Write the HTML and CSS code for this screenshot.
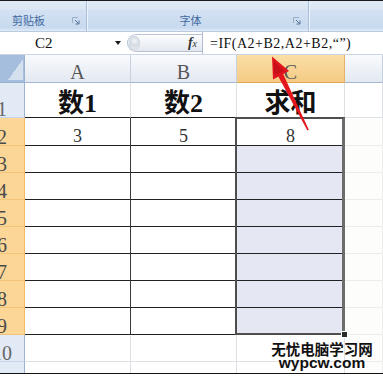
FILE: index.html
```html
<!DOCTYPE html>
<html>
<head>
<meta charset="utf-8">
<link rel="stylesheet" href="styles.css">
</head>
<body>
<div class="page">
  <div class="ribbon">
    <div class="grp g1">
      <div class="grp-top"></div>
      <div class="grp-band"><span class="glabel">剪贴板</span><svg class="launch" width="8" height="8" viewBox="0 0 8 8"><path d="M0.5 6V0.5H6" fill="none" stroke="#9aaec8"/><path d="M3 3L6.5 6.5M7 3.5V7H3.5" fill="none" stroke="#56709a"/></svg></div>
    </div>
    <div class="grp g2">
      <div class="grp-top"></div>
      <div class="grp-band"><span class="glabel mid">字体</span><svg class="launch" width="8" height="8" viewBox="0 0 8 8"><path d="M0.5 6V0.5H6" fill="none" stroke="#9aaec8"/><path d="M3 3L6.5 6.5M7 3.5V7H3.5" fill="none" stroke="#56709a"/></svg></div>
    </div>
    <div class="grp g3">
      <div class="grp-top"></div>
      <div class="grp-band"></div>
    </div>
  </div>

  <div class="fbar">
    <div class="namebox"><span class="nb-text">C2</span><span class="nb-drop"></span></div>
    <div class="fx-pill"><span class="grip"></span><span class="fx"><span class="fx-f">f</span><span class="fx-x">x</span></span></div>
    <div class="formula">=IF(A2+B2,A2+B2,“”)</div>
  </div>

  <div class="sheet">
    <div class="corner"></div>
    <div class="hd">A</div>
    <div class="hd">B</div>
    <div class="hd sel">C</div>
    <div class="hd"></div>

    <div class="rh"><span>1</span></div>
    <div class="c t">数1</div>
    <div class="c t">数2</div>
    <div class="c t">求和</div>
    <div class="c"></div>

    <div class="rh sel"><span>2</span></div>
    <div class="c b">3</div>
    <div class="c b">5</div>
    <div class="c b">8</div>
    <div class="c d"></div>

    <div class="rh sel"><span>3</span></div>
    <div class="c b"></div><div class="c b"></div><div class="c b s"></div><div class="c d"></div>
    <div class="rh sel"><span>4</span></div>
    <div class="c b"></div><div class="c b"></div><div class="c b s"></div><div class="c d"></div>
    <div class="rh sel"><span>5</span></div>
    <div class="c b"></div><div class="c b"></div><div class="c b s"></div><div class="c d"></div>
    <div class="rh sel"><span>6</span></div>
    <div class="c b"></div><div class="c b"></div><div class="c b s"></div><div class="c d"></div>
    <div class="rh sel"><span>7</span></div>
    <div class="c b"></div><div class="c b"></div><div class="c b s"></div><div class="c d"></div>
    <div class="rh sel"><span>8</span></div>
    <div class="c b"></div><div class="c b"></div><div class="c b s"></div><div class="c d"></div>
    <div class="rh sel"><span>9</span></div>
    <div class="c b"></div><div class="c b"></div><div class="c b s"></div><div class="c d"></div>

    <div class="rh"><span>10</span></div>
    <div class="c"></div><div class="c"></div><div class="c"></div><div class="c d"></div>
    <div class="rh"><span>11</span></div>
    <div class="c"></div><div class="c"></div><div class="c"></div><div class="c d"></div>
  </div>
  <div class="bottom-line"></div>

  <div class="selection"></div>
  <div class="fill-handle"></div>

  <svg class="arrow" width="383" height="376" viewBox="0 0 383 376">
    <polygon points="282.8,73.2 278.2,76.2 307.4,130.4 308.8,129.8" fill="#e3161e"/>
    <polygon points="272,56.5 289,71 273,79.5" fill="#e0141c"/>
    <polygon points="273.5,61 284,71 274.5,75" fill="#c80f17"/>
  </svg>

  <div class="watermark">
    <div class="wm-cn">无忧电脑学习网</div>
    <div class="wm-en">wypcw.com</div>
  </div>
</div>
</body>
</html>
```

FILE: styles.css
```css
html, body {
  margin: 0;
  padding: 0;
  background: #fff;
}
body {
  width: 383px;
  height: 376px;
  overflow: hidden;
  font-family: "Liberation Serif", "Noto Sans CJK SC", serif;
}
.page {
  position: relative;
  width: 383px;
  height: 376px;
  overflow: hidden;
}

/* ribbon */
.ribbon {
  display: flex;
  height: 30px;
  border-top: 1px solid #1b1b1b;
  background: #d6e3f3;
}
.grp {
  display: flex;
  flex-direction: column;
  box-sizing: border-box;
  border-right: 1px solid #a9bfdb;
  box-shadow: 1px 0 0 #eef4fb;
}
.g1 { width: 87px; }
.g2 { width: 221px; margin-left: 1px; }
.g3 { flex: 1; border-right: none; box-shadow: none; margin-left: 1px; }
.grp-top {
  height: 9px;
  background: linear-gradient(#e0eaf6, #dae6f4);
}
.grp-band {
  flex: 1;
  display: flex;
  align-items: center;
  background: linear-gradient(#d3e1f2, #c8daef 85%, #e4ecf7);
}
.glabel {
  font-family: "Noto Sans CJK SC", sans-serif;
  font-size: 11px;
  line-height: 12px;
  color: #4068a0;
  padding-left: 12px;
  padding-bottom: 1px;
}
.glabel.mid {
  flex: 1;
  padding-left: 0;
  text-align: center;
}
.g1 .glabel { flex: 1; }
.launch {
  display: block;
  margin-right: 6px;
  flex-shrink: 0;
}
.g2 .launch { margin-right: 7px; }

/* formula bar */
.fbar {
  display: flex;
  height: 24px;
  box-sizing: border-box;
  border-top: 1px solid #b9cbe1;
  border-bottom: 1px solid #c9d5e4;
  background: #fff;
}
.namebox {
  width: 122px;
  display: flex;
  align-items: center;
  font-family: "Liberation Serif", serif;
  font-size: 15px;
  color: #111;
}
.nb-text {
  flex: 1;
  padding-left: 35px;
  padding-top: 1px;
}
.nb-drop {
  width: 0;
  height: 0;
  border-left: 3px solid transparent;
  border-right: 3px solid transparent;
  border-top: 4px solid #1a1a1a;
  margin-right: 1px;
}
.fx-pill {
  display: flex;
  align-items: center;
  width: 75px;
  margin: 2px 0 2px 5px;
  box-sizing: border-box;
  border: 1px solid #b6c3d4;
  border-right: none;
  border-radius: 10px 0 0 10px;
  background: linear-gradient(#fdfdfe, #e3e8ef);
}
.grip {
  width: 11px;
  height: 14px;
  margin-left: 1px;
  border-radius: 50%;
  background: radial-gradient(circle at 50% 35%, #f2f4f7 0, #d5dbe3 45%, #eef1f5 80%);
  box-shadow: inset 0 0 0 1px #d0d7e1;
}
.fx {
  margin-left: auto;
  margin-right: 5px;
  color: #333;
  font-family: "Liberation Serif", serif;
  font-style: italic;
  line-height: 14px;
}
.fx-f { font-size: 14px; font-weight: bold; }
.fx-x { font-size: 10px; }
.formula {
  flex: 1;
  display: flex;
  align-items: center;
  border-left: 1px solid #aebdd0;
  padding-left: 7px;
  padding-top: 1px;
  font-size: 14px;
  letter-spacing: 0.5px;
  color: #111;
  white-space: nowrap;
}

/* sheet */
.sheet {
  display: grid;
  grid-template-columns: 25px 106px 106px 108px 38px;
  grid-template-rows: 28px 35px 28px repeat(9, 27px);
  height: 318px;
  overflow: hidden;
}
.sheet > div {
  box-sizing: border-box;
  overflow: hidden;
  display: flex;
  justify-content: center;
}
.corner {
  border-right: 1px solid #9bb2cf;
  border-bottom: 1px solid #9bb2cf;
  background:
    linear-gradient(to bottom right, transparent 50%, #d5e0ef 50%) no-repeat 8px 4px / 15px 21px,
    #a6bedd;
}
.hd {
  align-items: flex-end;
  background: linear-gradient(#f8fafc, #e3e9f2);
  border-right: 1px solid #c7d1de;
  border-bottom: 1px solid #a3b7d0;
  font-size: 20px;
  line-height: 20px;
  color: #575757;
}
.hd.sel {
  background: linear-gradient(#fbdea6, #f5cb85);
  border-right-color: #e2b46a;
  border-bottom-color: #dfa954;
}
.rh {
  justify-content: flex-start !important;
  align-items: flex-end;
  background: #e2eaf6;
  border-right: 1px solid #9fb4cf;
  border-bottom: 1px solid #c8d5e6;
  font-size: 20px;
  line-height: 16px;
  color: #666;
}
.rh span {
  display: block;
  flex-shrink: 0;
  width: 44px;
  margin-left: -20px;
  text-align: center;
}
.rh.sel {
  background: #fbd697;
  border-right-color: #efbb66;
  border-bottom-color: #f2c47a;
  color: #4a4a4a;
}
.c {
  background: #fff;
  border-right: 1px solid #dde1e6;
  border-bottom: 1px solid #dde1e6;
}
.c.t {
  border-bottom-color: #1e1e1e;
  align-items: flex-end;
  font-weight: bold;
  font-size: 26px;
  line-height: 26px;
  color: #111;
}
.c.b {
  border-right-color: #3a3a3a;
  border-bottom-color: #222;
  align-items: flex-end;
  font-size: 18px;
  line-height: 18px;
  color: #333;
}
.c.s { background: #e5e8f2; }
.c.d {
  background: #fdfdfb;
  border-right-color: #ececec;
  border-bottom-color: #ececec;
}
.bottom-line {
  height: 1px;
  background: #111;
}

/* overlays */
.selection {
  position: absolute;
  left: 235px;
  top: 117px;
  width: 110px;
  height: 218px;
  box-sizing: border-box;
  border: 2px solid #4e4e4e;
  border-right: 3px solid #6c6c6c;
}
.fill-handle {
  position: absolute;
  left: 341px;
  top: 331px;
  width: 5px;
  height: 5px;
  background: #2a2a2a;
  border: 1px solid #fff;
}
.arrow {
  position: absolute;
  left: 0;
  top: 0;
  pointer-events: none;
}
.watermark {
  position: absolute;
  left: 270px;
  top: 341px;
  width: 104px;
  text-align: center;
  color: #111;
}
.wm-cn {
  font-family: "Noto Sans CJK SC", sans-serif;
  font-weight: bold;
  font-size: 14.5px;
  line-height: 15px;
}
.wm-en {
  font-family: "Liberation Sans", Arial, sans-serif;
  font-weight: bold;
  font-size: 15.5px;
  line-height: 13px;
}
```
